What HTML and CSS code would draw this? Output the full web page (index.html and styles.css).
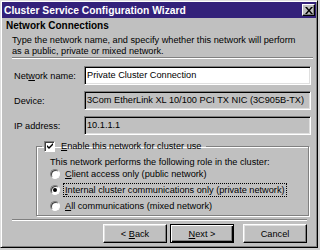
FILE: index.html
```html
<!DOCTYPE html>
<html lang="en">
<head>
    <meta charset="UTF-8">
    <meta name="viewport" content="width=device-width, initial-scale=1.0">
    <title>Cluster Service Configuration Wizard</title>
    <link rel="stylesheet" href="styles.css">
</head>
<body>
    <div class="window">
        <!-- Title Bar -->
        <div class="titlebar">
            <span class="title">Cluster Service Configuration Wizard</span>
            <span class="close-btn">
                <svg width="8" height="7" viewBox="0 0 8 7">
                    <path d="M0 0h2l2 2.5L6 0h2L5 3.5 8 7H6L4 4.5 2 7H0l3-3.5z" fill="#000"/>
                </svg>
            </span>
        </div>
        <!-- Header -->
        <div class="header">
            <h1>Network Connections</h1>
            <p>Type the network name, and specify whether this network will perform<br>as a public, private or mixed network.</p>
        </div>
        <div class="etched sep-top"></div>
        <!-- Fields -->
        <div class="fields">
            <label>Net<u>w</u>ork name:</label>
            <div class="field field-edit">Private Cluster Connection</div>
            <label>Device:</label>
            <div class="field">3Com EtherLink XL 10/100 PCI TX NIC (3C905B-TX)</div>
            <label>IP address:</label>
            <div class="field">10.1.1.1</div>
        </div>
        <!-- Cluster use group -->
        <fieldset class="group">
            <legend>
                <span class="checkbox">
                    <svg width="8" height="8" viewBox="0 0 8 8">
                        <path d="M1 3l2 2 4-4v2L3 7 1 5z" fill="#000"/>
                    </svg>
                </span>
                <span><u>E</u>nable this network for cluster use</span>
            </legend>
            <div class="group-body">
                <p>This network performs the following role in the cluster:</p>
                <div class="radio-list">
                    <div class="radio-row">
                        <span class="radio"></span>
                        <span class="radio-label"><u>C</u>lient access only (public network)</span>
                    </div>
                    <div class="radio-row">
                        <span class="radio selected"></span>
                        <span class="radio-label focused"><u>I</u>nternal cluster communications only (private network)</span>
                    </div>
                    <div class="radio-row">
                        <span class="radio"></span>
                        <span class="radio-label"><u>A</u>ll communications (mixed network)</span>
                    </div>
                </div>
            </div>
        </fieldset>
        <div class="etched sep-bottom"></div>
        <!-- Buttons -->
        <div class="buttons">
            <button class="btn back">&lt; <u>B</u>ack</button>
            <button class="btn default next"><u>N</u>ext &gt;</button>
            <button class="btn">Cancel</button>
        </div>
    </div>
</body>
</html>
```

FILE: styles.css
```css
body {
    margin: 0;
    background: #d0d0d0;
    font-family: "Liberation Sans", Arial, sans-serif;
    font-size: 9.2px;
    color: #000;
}
/* Window frame */
.window {
    width: 318px;
    height: 248px;
    box-sizing: border-box;
    padding: 1px;
    background: #c0c0c0;
    border: 1px solid;
    border-color: #dfdfdf #000 #000 #dfdfdf;
    box-shadow: inset 1px 1px 0 #fff, inset -1px -1px 0 #808080;
    display: flex;
    flex-direction: column;
}
/* Title bar */
.titlebar {
    height: 16px;
    flex-shrink: 0;
    background: #33217a;
    color: #fff;
    display: flex;
    align-items: center;
    justify-content: space-between;
    padding: 0 1px 0 2px;
}
.title {
    font-size: 10.3px;
    font-weight: bold;
}
.close-btn {
    width: 13px;
    height: 12px;
    box-sizing: border-box;
    background: #c0c0c0;
    border: 1px solid;
    border-color: #fff #000 #000 #fff;
    box-shadow: inset -1px -1px 0 #808080;
    display: flex;
    align-items: center;
    justify-content: center;
}
/* Header */
.header {
    padding: 2px 4px 0;
}
.header h1 {
    margin: 0;
    font-size: 10px;
    line-height: 12px;
    font-weight: bold;
}
.header p {
    margin: 3px 0 0 6px;
    line-height: 11px;
}
/* Etched separators */
.etched {
    height: 0;
    border-top: 1px solid #808080;
    border-bottom: 1px solid #fff;
}
.sep-top {
    margin: 0 3px 0 10px;
}
.sep-bottom {
    margin: 3px 9px 0 10px;
}
/* Fields */
.fields {
    display: grid;
    grid-template-columns: 70px 1fr;
    grid-auto-rows: 19px;
    row-gap: 6px;
    align-items: center;
    margin: 7px 5px 0 12px;
}
.field {
    height: 19px;
    box-sizing: border-box;
    border: 1px solid;
    border-color: #808080 #fff #fff #808080;
    box-shadow: inset 1px 1px 0 #000, inset -1px -1px 0 #dfdfdf;
    padding: 0 2px;
    line-height: 17px;
    white-space: nowrap;
    overflow: hidden;
}
.field-edit {
    background: #fff;
}
/* Group box */
.group {
    margin: 5px 7px 0 34px;
    padding: 5px 0 1px 5px;
    border: 1px solid #808080;
    box-shadow: inset 1px 1px 0 #fff, 1px 1px 0 #fff;
    min-width: 0;
}
.group legend {
    padding: 0 5px 0 2px;
    display: flex;
    align-items: center;
    gap: 6px;
    line-height: 12px;
}
.checkbox {
    width: 11px;
    height: 11px;
    box-sizing: border-box;
    background: #fff;
    border: 1px solid;
    border-color: #808080 #fff #fff #808080;
    box-shadow: inset 1px 1px 0 #404040;
    display: flex;
    align-items: center;
    justify-content: center;
}
.group-body {
    padding-left: 8px;
}
.group-body p {
    margin: 0;
    line-height: 10px;
}
.radio-list {
    margin-top: -1px;
}
.radio-row {
    height: 16px;
    display: flex;
    align-items: center;
    gap: 3px;
}
.radio {
    width: 10px;
    height: 10px;
    box-sizing: border-box;
    border-radius: 50%;
    background: #fff;
    border: 1px solid;
    border-color: #808080 #fff #fff #808080;
    box-shadow: inset 1px 1px 0 #404040;
    display: flex;
    align-items: center;
    justify-content: center;
}
.radio.selected::after {
    content: "";
    width: 4px;
    height: 4px;
    border-radius: 50%;
    background: #000;
}
.radio-label {
    padding: 0 1px;
    border: 1px dotted transparent;
    line-height: 12px;
}
.radio-label.focused {
    border-color: #000;
}
/* Buttons */
.buttons {
    display: flex;
    justify-content: flex-end;
    margin: 3px 9px 0 0;
}
.btn {
    width: 64px;
    height: 19px;
    padding: 0;
    font-family: inherit;
    font-size: 9.2px;
    color: #000;
    background: #c0c0c0;
    border: 1px solid;
    border-color: #fff #000 #000 #fff;
    box-shadow: inset -1px -1px 0 #808080, inset 1px 1px 0 #dfdfdf;
    border-radius: 0;
}
.btn.back {
    margin-right: 3px;
}
.btn.next {
    margin-right: 9px;
}
.btn.default {
    border-color: #000;
    box-shadow: inset 1px 1px 0 #fff, inset -1px -1px 0 #000, inset -2px -2px 0 #808080;
}
```
